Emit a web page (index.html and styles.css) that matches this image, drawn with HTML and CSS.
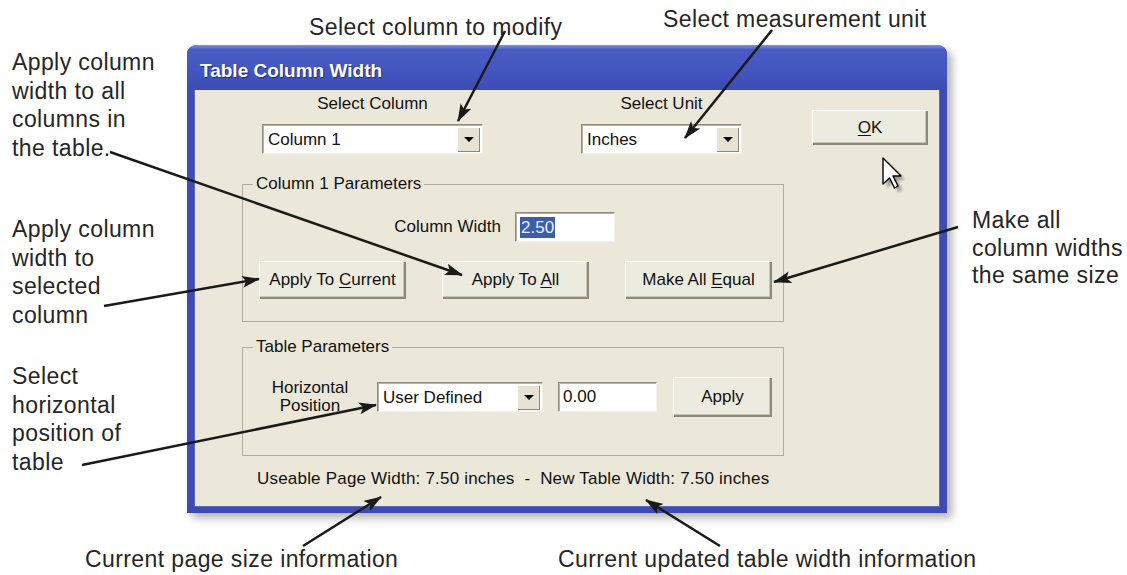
FILE: index.html
```html
<!DOCTYPE html>
<html lang="en">
<head>
  <meta charset="UTF-8" />
  <title>Table Column Width</title>
  <link rel="stylesheet" href="styles.css">
</head>
<body>
  <div class="page">
    <p class="note note-col">Select column to modify</p>
    <p class="note note-unit">Select measurement unit</p>
    <p class="note note-all">Apply column<br>width to all<br>columns in<br>the table.</p>
    <p class="note note-current">Apply column<br>width to<br>selected<br>column</p>
    <p class="note note-position">Select<br>horizontal<br>position of<br>table</p>
    <p class="note note-equal">Make all<br>column widths<br>the same size</p>
    <p class="note note-page">Current page size information</p>
    <p class="note note-table">Current updated table width information</p>

    <div class="dialog">
      <div class="titlebar">Table Column Width</div>
      <div class="client">
        <div class="top-row">
          <div class="field field-column">
            <div class="label">Select Column</div>
            <div class="combo">
              <span class="combo-value">Column 1</span>
              <span class="combo-btn"></span>
            </div>
          </div>
          <div class="field field-unit">
            <div class="label">Select Unit</div>
            <div class="combo">
              <span class="combo-value">Inches</span>
              <span class="combo-btn"></span>
            </div>
          </div>
          <button class="btn btn-ok"><u>O</u>K</button>
        </div>

        <fieldset class="group group-column">
          <legend>Column 1 Parameters</legend>
          <div class="width-row">
            <span>Column Width</span>
            <div class="textbox textbox-width"><span class="sel">2.50</span></div>
          </div>
          <div class="button-row">
            <button class="btn btn-wide">Apply To <u>C</u>urrent</button>
            <button class="btn btn-wide">Apply To <u>A</u>ll</button>
            <button class="btn btn-wide">Make All <u>E</u>qual</button>
          </div>
        </fieldset>

        <fieldset class="group group-table">
          <legend>Table Parameters</legend>
          <div class="position-row">
            <div class="pos-label">Horizontal<br>Position</div>
            <div class="combo combo-pos">
              <span class="combo-value">User Defined</span>
              <span class="combo-btn"></span>
            </div>
            <div class="textbox textbox-pos">0.00</div>
            <button class="btn btn-apply">Apply</button>
          </div>
        </fieldset>

        <div class="status">Useable Page Width: 7.50 inches  -  New Table Width: 7.50 inches</div>
      </div>
    </div>

    <!-- callout arrows -->
    <svg class="arrows" width="1127" height="575" viewBox="0 0 1127 575">
      <defs>
        <marker id="head" viewBox="0 0 18 12" refX="17" refY="6" markerWidth="18" markerHeight="12" markerUnits="userSpaceOnUse" orient="auto">
          <path d="M0,0 L18,6 L0,12 L4,6 Z" fill="#1a1a1a" />
        </marker>
      </defs>
      <g stroke="#1a1a1a" stroke-width="2.5" fill="none" marker-end="url(#head)">
        <line x1="505" y1="31" x2="458" y2="121" />
        <line x1="772" y1="30" x2="685" y2="138" />
        <line x1="110" y1="152" x2="462" y2="275" />
        <line x1="104" y1="306" x2="259" y2="279" />
        <line x1="82" y1="465" x2="376" y2="405" />
        <line x1="958" y1="227" x2="774" y2="282" />
        <line x1="303" y1="546" x2="381" y2="497" />
        <line x1="720" y1="546" x2="646" y2="500" />
      </g>
    </svg>

    <svg class="cursor" width="26" height="38" viewBox="0 0 26 38">
      <defs>
        <filter id="soft" x="-30%" y="-30%" width="160%" height="160%">
          <feGaussianBlur stdDeviation="1.5" />
        </filter>
      </defs>
      <path d="M3,3 L3,29 L9.6,23 L14.5,33 L18,31 L13,21 L21,21 Z" fill="#000" opacity="0.35" filter="url(#soft)" transform="translate(2,2)" />
      <path d="M1,1 L1,27 L7.6,21 L12.5,31 L16,29 L11,19 L19,19 Z" fill="#fff" stroke="#000" stroke-width="1.4" stroke-linejoin="round" />
    </svg>
  </div>
</body>
</html>
```

FILE: styles.css
```css
* {
  margin: 0;
  padding: 0;
  box-sizing: border-box;
}

body {
  background: #fff;
  font-family: "Liberation Sans", Arial, sans-serif;
}

.page {
  position: relative;
  width: 1127px;
  height: 575px;
  padding: 45px 0 0 187px;
  overflow: hidden;
}

/* callout texts */
.note {
  position: absolute;
  font-size: 23px;
  line-height: 28.5px;
  letter-spacing: 0.4px;
  color: #262626;
  white-space: nowrap;
}

.note-col { left: 309px; top: 13px; }
.note-unit { left: 663px; top: 5px; }
.note-all { left: 12px; top: 48px; }
.note-current { left: 12px; top: 215px; }
.note-position { left: 12px; top: 362px; }
.note-equal { left: 972px; top: 207px; line-height: 27.5px; }
.note-page { left: 85px; top: 545px; }
.note-table { left: 558px; top: 545px; }

.arrows,
.cursor {
  position: absolute;
  top: 0;
  left: 0;
  pointer-events: none;
}

.cursor {
  left: 882px;
  top: 157px;
}

/* window */
.dialog {
  width: 760px;
  height: 468px;
  display: flex;
  flex-direction: column;
  background: #3d4cb2;
  border-radius: 9px 9px 0 0;
  padding: 0 7px 6px;
  box-shadow: 5px 5px 9px rgba(0, 0, 0, 0.3);
}

.titlebar {
  margin: 0 -7px;
  height: 45px;
  padding: 15px 13px 0;
  border-radius: 9px 9px 0 0;
  background: linear-gradient(#8291e0 0%, #4a5cc4 10%, #4356bf 60%, #3b4cb2 100%);
  color: #fff;
  font-weight: bold;
  font-size: 19px;
  line-height: 22px;
  text-shadow: 1px 1px 1px #1d2a80;
}

.client {
  flex: 1;
  background: #ebe8d9;
  padding-top: 4px;
  font-size: 17px;
  line-height: 20px;
  color: #111;
  box-shadow: inset 1px 0 #5a68c4, inset -1px 0 #5a68c4, inset 0 -1px #5a68c4;
}

.top-row {
  display: flex;
  align-items: flex-start;
  padding-left: 68px;
}

.field {
  display: flex;
  flex-direction: column;
  align-items: center;
  gap: 10px;
}

.field-column { width: 221px; }
.field-unit { width: 161px; margin-left: 98px; }

/* controls */
.combo,
.textbox {
  height: 30px;
  display: flex;
  align-items: center;
  background: #fff;
  border: 1px solid;
  border-color: #8f8d80 #f3f1e8 #f3f1e8 #8f8d80;
  box-shadow: inset 1px 1px #b4b2a4;
}

.combo {
  width: 100%;
  padding: 2px 2px 1px 5px;
}

.combo-value {
  flex: 1;
}

.combo-btn {
  width: 23px;
  height: 100%;
  display: flex;
  align-items: center;
  justify-content: center;
  background: #e6e3d4;
  box-shadow: inset 1px 1px #fff, inset -1px -1px #8a887b;
}

.combo-btn::after {
  content: "";
  border-left: 5px solid transparent;
  border-right: 5px solid transparent;
  border-top: 5px solid #000;
}

.textbox {
  padding-left: 4px;
}

.textbox-width { width: 100px; }
.textbox-pos { width: 99px; margin-left: 15px; }

.sel {
  background: #3b5dab;
  color: #e9efff;
  padding: 1px 1px 0;
}

.btn {
  font-family: inherit;
  font-size: 17px;
  color: #111;
  background: #ecebdf;
  border: none;
  box-shadow: inset 1px 1px #fff, inset -2px -2px #8c8a7d, inset -3px -3px #c9c6b6;
}

.btn u {
  text-underline-offset: 2px;
}

.btn-ok {
  width: 116px;
  height: 35px;
  margin-left: 70px;
  margin-top: 16px;
}

/* group boxes */
.group {
  margin-left: 48px;
  width: 542px;
  min-width: 0;
  border: 1px solid #b0ad9d;
  padding: 0;
}

.group legend {
  margin-left: 10px;
  padding: 0 3px;
  line-height: 20px;
}

.group-column { margin-top: 20px; }
.group-table { margin-top: 15px; }

.width-row {
  display: flex;
  justify-content: flex-end;
  align-items: center;
  gap: 14px;
  margin-top: 18px;
  padding-right: 168px;
}

.button-row {
  display: flex;
  gap: 36px;
  padding-left: 16px;
  margin: 19px 0 22px;
}

.btn-wide {
  width: 147px;
  height: 38px;
}

.position-row {
  display: flex;
  align-items: center;
  height: 40px;
  padding-left: 16px;
  margin: 20px 0 38px;
}

.pos-label {
  width: 102px;
  text-align: center;
  line-height: 18px;
}

.combo-pos {
  width: 166px;
  margin-left: 16px;
}

.btn-apply {
  width: 99px;
  height: 40px;
  margin-left: 16px;
}

.status {
  margin: 13px 0 0 63px;
  letter-spacing: 0.2px;
  white-space: pre;
}
```
